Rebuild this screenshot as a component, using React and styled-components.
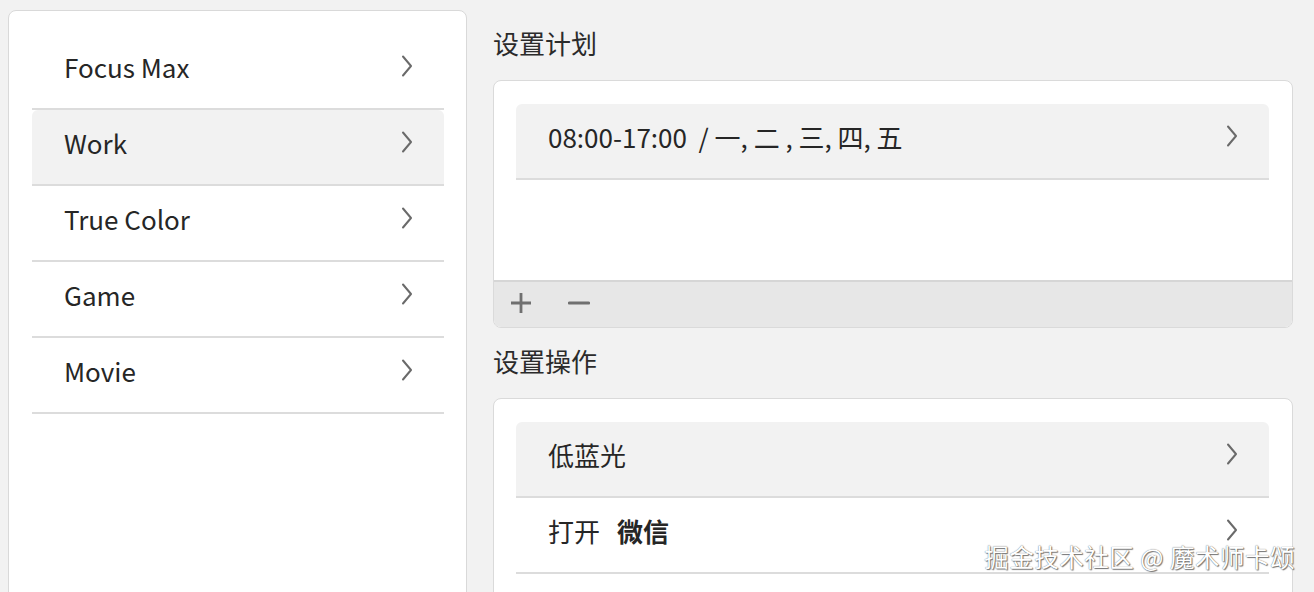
import React from 'react';
import styled, { createGlobalStyle } from 'styled-components';

const GlobalStyle = createGlobalStyle`
  html, body {
    margin: 0;
    padding: 0;
    background: #f2f2f2;
    font-family: "Noto Sans CJK SC", "Noto Sans", sans-serif;
    color: #262626;
    overflow: hidden;
  }
`;

const Page = styled.div`
  display: flex;
  gap: 26px;
  padding: 0 21px 0 8px;
  height: 592px;
  position: relative;
  overflow: hidden;
`;

const Sidebar = styled.div`
  box-sizing: border-box;
  width: 459px;
  flex: none;
  margin-top: 10px;
  height: 620px;
  background: #fff;
  border: 1px solid #d9d9d9;
  border-radius: 8px;
  padding: 23px 22px 0 23px;
`;

const Main = styled.div`
  flex: 1;
  display: flex;
  flex-direction: column;
  padding-top: 10px;
`;

const Title = styled.div`
  font-size: 26px;
  line-height: 34px;
  padding: 16px 0 20px;
  color: #2b2b2b;
`;

const Card = styled.div`
  background: #fff;
  border: 1px solid #dadada;
  border-radius: 8px;
  overflow: hidden;
  flex: none;
  min-height: ${({ minH }) => (minH ? `${minH}px` : 'auto')};
`;

const CardBody = styled.div`
  padding: 23px 23px 0 22px;
  min-height: ${({ minH }) => minH || 0}px;
  box-sizing: border-box;
`;

const Row = styled.div`
  box-sizing: border-box;
  display: flex;
  align-items: center;
  justify-content: space-between;
  height: 76px;
  padding: 0 30px 10px 32px;
  background: ${({ active }) => (active ? '#f2f2f2' : 'transparent')};
  border-radius: ${({ active }) => (active ? '6px 6px 0 0' : '0')};
  border-bottom: 2px solid #dcdcdc;
  font-size: 26px;
  color: #262626;
  white-space: pre;
`;

const Bold = styled.span`
  font-weight: 700;
  margin-left: 17px;
`;

const Toolbar = styled.div`
  box-sizing: border-box;
  display: flex;
  align-items: center;
  gap: 36px;
  height: 47px;
  padding: 0 0 4px 16px;
  background: #e7e7e7;
  border-top: 2px solid #d6d6d6;
`;

const ToolButton = styled.button`
  border: none;
  background: transparent;
  padding: 0;
  width: 22px;
  height: 22px;
  display: flex;
  align-items: center;
  justify-content: center;
  color: #707070;
`;

const Watermark = styled.div`
  position: absolute;
  right: 19px;
  bottom: 20px;
  font-size: 24.5px;
  line-height: 30px;
  color: #fff;
  text-shadow: 0 0 1px #555, 1px 1px 1px #777;
  letter-spacing: 0.5px;
`;

const Chevron = () => (
  <svg width="14" height="22" viewBox="0 0 14 22" fill="none">
    <path d="M3 1.5 L11 11 L3 20.5" stroke="#6a6a6a" strokeWidth="2" strokeLinecap="round" strokeLinejoin="round" />
  </svg>
);

const PlusIcon = () => (
  <svg width="22" height="22" viewBox="0 0 22 22">
    <path d="M11 1 V21 M1 11 H21" stroke="currentColor" strokeWidth="2.8" />
  </svg>
);

const MinusIcon = () => (
  <svg width="22" height="22" viewBox="0 0 22 22">
    <path d="M1.5 11 H20.5" stroke="currentColor" strokeWidth="3.2" strokeLinecap="round" />
  </svg>
);

const modes = ['Focus Max', 'Work', 'True Color', 'Game', 'Movie'];

export default function App() {
  return (
    <>
      <GlobalStyle />
      <Page>
        <Sidebar>
          {modes.map((m) => (
            <Row key={m} active={m === 'Work'}>
              <span>{m}</span>
              <Chevron />
            </Row>
          ))}
        </Sidebar>
        <Main>
          <Title>设置计划</Title>
          <Card>
            <CardBody minH={199}>
              <Row active>
                <span>{'08:00-17:00  / 一, 二 , 三, 四, 五'}</span>
                <Chevron />
              </Row>
            </CardBody>
            <Toolbar>
              <ToolButton><PlusIcon /></ToolButton>
              <ToolButton><MinusIcon /></ToolButton>
            </Toolbar>
          </Card>
          <Title>设置操作</Title>
          <Card minH={260}>
            <CardBody>
              <Row active>
                <span>低蓝光</span>
                <Chevron />
              </Row>
              <Row>
                <span>打开<Bold>微信</Bold></span>
                <Chevron />
              </Row>
            </CardBody>
          </Card>
        </Main>
        <Watermark>掘金技术社区 @ 魔术师卡颂</Watermark>
      </Page>
    </>
  );
}
